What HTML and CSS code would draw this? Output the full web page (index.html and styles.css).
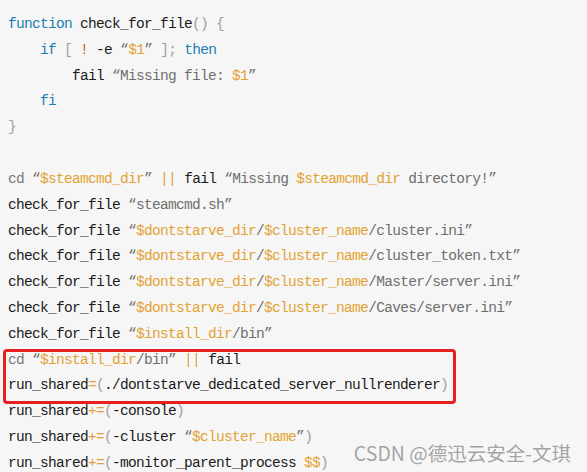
FILE: index.html
```html
<!DOCTYPE html>
<html>
<head>
<meta charset="utf-8">
<link rel="stylesheet" href="styles.css">
</head>
<body>
<div class="code">
<div class="ln"><span class="kw">function</span> check_for_file<span class="p">()</span> <span class="p">{</span></div>
<div class="ln">    <span class="kw">if</span> <span class="p">[</span> <span class="neg">!</span> -e <span class="s">“<span class="v">$1</span>”</span> <span class="p">];</span> <span class="kw">then</span></div>
<div class="ln">        fail <span class="s">“Missing file: <span class="v">$1</span>”</span></div>
<div class="ln">    <span class="kw">fi</span></div>
<div class="ln"><span class="p">}</span></div>
<div class="ln"> </div>
<div class="ln"><span class="g">cd</span> <span class="s">“<span class="v">$steamcmd_dir</span>”</span> <span class="op">||</span> fail <span class="s">“Missing <span class="v">$steamcmd_dir</span> directory!”</span></div>
<div class="ln">check_for_file <span class="s">“steamcmd.sh”</span></div>
<div class="ln">check_for_file <span class="s">“<span class="v">$dontstarve_dir</span>/<span class="v">$cluster_name</span>/cluster.ini”</span></div>
<div class="ln">check_for_file <span class="s">“<span class="v">$dontstarve_dir</span>/<span class="v">$cluster_name</span>/cluster_token.txt”</span></div>
<div class="ln">check_for_file <span class="s">“<span class="v">$dontstarve_dir</span>/<span class="v">$cluster_name</span>/Master/server.ini”</span></div>
<div class="ln">check_for_file <span class="s">“<span class="v">$dontstarve_dir</span>/<span class="v">$cluster_name</span>/Caves/server.ini”</span></div>
<div class="ln">check_for_file <span class="s">“<span class="v">$install_dir</span>/bin”</span></div>
<div class="mark">
<div class="ln"><span class="g">cd</span> <span class="s">“<span class="v">$install_dir</span>/bin”</span> <span class="op">||</span> fail</div>
<div class="ln">run_shared<span class="op">=</span><span class="p">(</span>./dontstarve_dedicated_server_nullrenderer<span class="p">)</span></div>
</div>
<div class="ln">run_shared<span class="op">+=</span><span class="p">(</span>-console<span class="p">)</span></div>
<div class="ln">run_shared<span class="op">+=</span><span class="p">(</span>-cluster <span class="s">“<span class="v">$cluster_name</span>”</span><span class="p">)</span></div>
<div class="ln">run_shared<span class="op">+=</span><span class="p">(</span>-monitor_parent_process <span class="v">$$</span><span class="p">)</span></div>
</div>
<div class="wm">CSDN @德迅云安全-文琪</div>
</body>
</html>
```
FILE: styles.css
```css
html, body {
  margin: 0;
  padding: 0;
  background: #f6f6f6;
  height: 100%;
  overflow: hidden;
}
.code {
  padding: 12px 0 0 8px;
  font-family: "Liberation Mono", monospace;
  font-size: 14.5px;
  letter-spacing: -0.7px;
  line-height: 25.82px;
  color: #1b1b1b;
}
.ln {
  height: 25.82px;
  white-space: pre;
}
.kw { color: #1d7db3; }
.p { color: #a0a0a0; }
.neg { color: #c4563a; }
.s { color: #6e6e6e; }
.v { color: #e3a232; }
.g { color: #7a7a7a; }
.op { color: #e69a45; }
.mark {
  position: relative;
}
.mark::before {
  content: "";
  position: absolute;
  top: 1px;
  bottom: -5px;
  left: -5px;
  width: 453px;
  border: 3px solid #e5211f;
  border-radius: 4px;
  box-sizing: border-box;
}
.wm {
  position: absolute;
  right: 16px;
  bottom: 8px;
  font-family: "Noto Sans CJK SC", "Liberation Sans", sans-serif;
  font-size: 19.5px;
  line-height: 22px;
  color: #a3a3a3;
  text-shadow: 0 0 1px #fff;
}
```
